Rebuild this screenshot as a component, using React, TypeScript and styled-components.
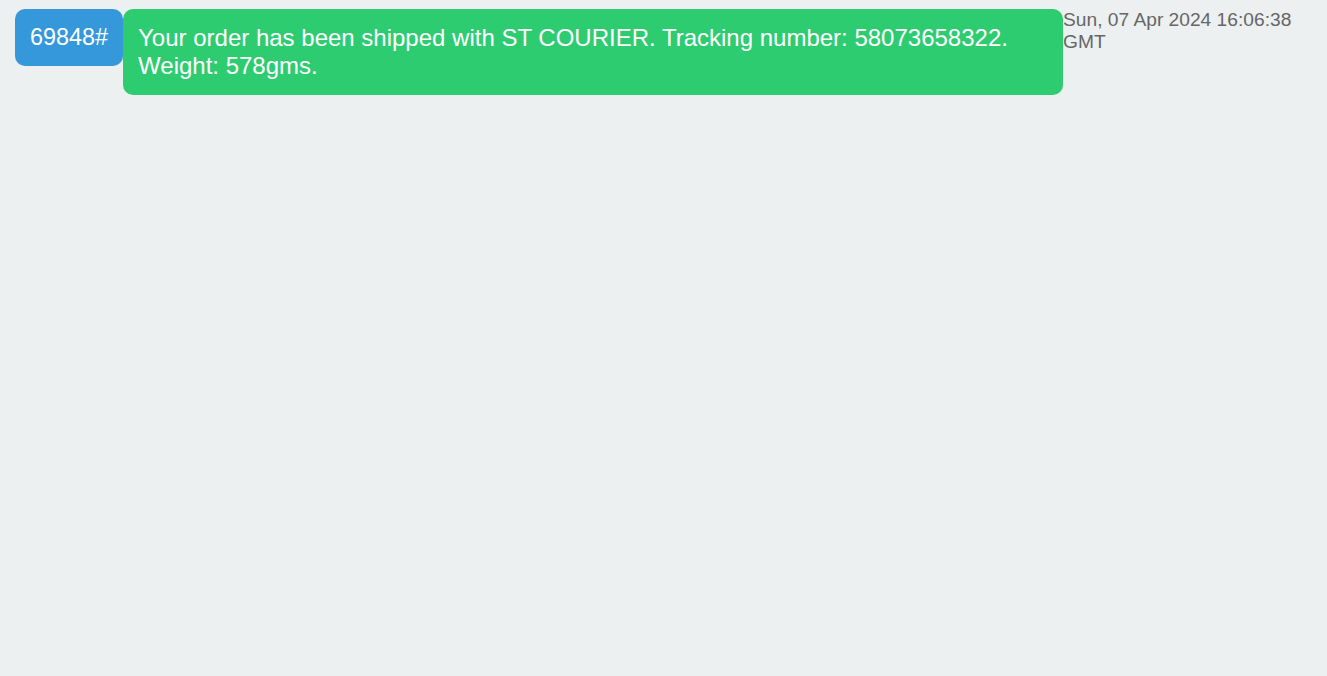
import styled, { createGlobalStyle } from "styled-components";

const GlobalStyle = createGlobalStyle`
  html, body {
    margin: 0;
    padding: 0;
    background: #ecf0f1;
    font-family: "Liberation Sans", Arial, sans-serif;
  }
`;

const Page = styled.div`
  min-height: 676px;
  box-sizing: border-box;
  padding: 9px 0 0 15px;
`;

const Row = styled.div`
  display: flex;
  align-items: flex-start;
`;

const Bubble = styled.div<{ $tone: "blue" | "green" }>`
  background: ${(p) => (p.$tone === "blue" ? "#3498db" : "#2ecc71")};
  color: white;
  font-size: ${(p) => (p.$tone === "blue" ? "23.4px" : "24px")};
  padding: 15px;
  border-radius: 10px;
  ${(p) => p.$tone === "green" && "flex: 1;"}
`;

const Stamp = styled.div`
  width: 264px;
  flex-shrink: 0;
  color: #666;
  font-size: 19.2px;
  padding-right: 20px;
  box-sizing: border-box;
`;

function App() {
  return (
    <Page>
      <GlobalStyle />
      <Row>
        <Bubble $tone="blue">69848#</Bubble>
        <Bubble $tone="green">
          Your order has been shipped with ST COURIER. Tracking number:
          58073658322. Weight: 578gms.
        </Bubble>
        <Stamp>Sun, 07 Apr 2024 16:06:38 GMT</Stamp>
      </Row>
    </Page>
  );
}

export default App;
